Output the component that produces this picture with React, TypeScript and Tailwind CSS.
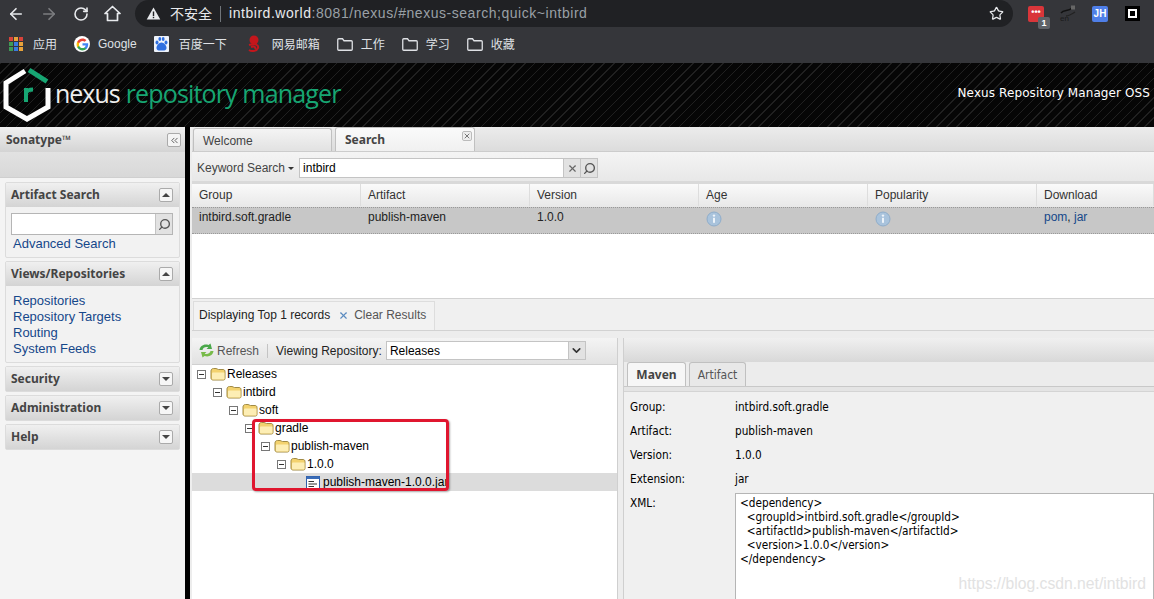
import { ArrowLeft, ArrowRight, RotateCw, Star, Search, ChevronsLeft, X, ChevronDown } from 'lucide-react';

const COLUMNS = ['Group', 'Artifact', 'Version', 'Age', 'Popularity', 'Download'];
const UI_FONT = "font-['Liberation_Sans',Arial,sans-serif]";
const BOLD_FONT = "font-['Noto_Sans',Verdana,sans-serif]";
const FORM_FONT = "font-['DejaVu_Sans_Condensed','DejaVu_Sans',sans-serif]";
const HEAD_BG = 'bg-gradient-to-b from-[#f0f0f0] to-[#d4d4d4]';

function Folder() {
  return (
    <svg width="16" height="14" viewBox="0 0 16 14" className="shrink-0">
      <path d="M1 4 C1 2.500 2 1.500 3.500 1.500 H6 C7 1.500 7.500 2.500 8.500 2.500 H13 C14.200 2.500 15 3.300 15 4.500 V11.500 C15 12.500 14.200 13 13.500 13 H3 C1.800 13 1 12 1 11 Z" fill="#f3d26e" stroke="#a08a45" />
      <path d="M2 6.500 C2 5.800 2.500 5.500 3 5.500 H14.500 V11.500 C14.500 12.200 14 12.500 13.500 12.500 H3 C2.500 12.500 2 12 2 11.500 Z" fill="#fdeeb4" />
    </svg>
  );
}

function Minus() {
  return (
    <span className="flex h-[9px] w-[9px] shrink-0 items-center justify-center border border-[#777] bg-white">
      <span className="h-px w-[5px] bg-[#333]" />
    </span>
  );
}

function TreeRow({ indent, label, selected }: { indent: string; label: string; selected?: boolean }) {
  return (
    <div className={`flex h-[18px] items-center text-[12px] text-black ${indent} ${selected ? 'bg-[#dcdcdc]' : ''}`}>
      {selected ? (
        <svg width="14" height="13" viewBox="0 0 14 13" className="mr-[3px] ml-[33px] shrink-0">
          <rect x="0.5" y="0.5" width="13" height="12" fill="#fff" stroke="#2f5ea8" />
          <rect x="0.5" y="0.5" width="13" height="2.5" fill="#3b6db8" />
          <path d="M2.5 5.5 H8 M2.5 8 H11 M2.5 10.5 H8" stroke="#333" />
        </svg>
      ) : (
        <>
          <Minus />
          <span className="ml-[4px] mr-[1px]"><Folder /></span>
        </>
      )}
      <span>{label}</span>
    </div>
  );
}

function Caret({ up }: { up?: boolean }) {
  return (
    <span className="flex h-[14px] w-[14px] items-center justify-center rounded-[2px] border border-[#aaa] bg-[#f6f6f6]">
      {up ? (
        <span className="h-0 w-0 border-x-[4px] border-b-[4px] border-x-transparent border-b-[#444]" />
      ) : (
        <span className="h-0 w-0 border-x-[4px] border-t-[4px] border-x-transparent border-t-[#444]" />
      )}
    </span>
  );
}

function Panel({ title, open, children }: { title: string; open?: boolean; children?: React.ReactNode }) {
  return (
    <div className="rounded-[2px] border border-[#dcdcdc] bg-[#f2f2f2]">
      <div className={`flex h-[24px] items-center justify-between pl-[5px] pr-[6px] ${HEAD_BG}`}>
        <span className={`${BOLD_FONT} text-[12px] font-bold text-[#444]`}>{title}</span>
        <Caret up={open} />
      </div>
      {children}
    </div>
  );
}

function NavLink({ children }: { children: React.ReactNode }) {
  return <div className="h-[16px] text-[13px] leading-[16px] text-[#15478a]">{children}</div>;
}

function FormRow({ label, value }: { label: string; value: string }) {
  return (
    <div className="flex h-[24px] items-center">
      <span className="w-[105px] text-black">{label}</span>
      <span className="text-black">{value}</span>
    </div>
  );
}

function InfoDot() {
  return (
    <svg width="16" height="16" viewBox="0 0 16 16" className="mt-[3px]">
      <circle cx="8" cy="8" r="7" fill="#a9c3dc" stroke="#8fadca" />
      <circle cx="8" cy="4.600" r="1.200" fill="#eef4fa" />
      <rect x="7" y="6.800" width="2" height="5" fill="#eef4fa" />
    </svg>
  );
}

function BrowserBars() {
  return (
    <>
      <div className="flex h-[27px] shrink-0 items-center bg-[#35363a] text-[#e8eaed]">
        <div className="flex w-[135px] shrink-0 items-center gap-[15px] pl-[7px]">
          <ArrowLeft size={18} strokeWidth={2.2} />
          <ArrowRight size={18} strokeWidth={2.2} className="text-[#7c7d80]" />
          <RotateCw size={16} strokeWidth={2.4} />
          <svg width="17" height="17" viewBox="0 0 17 17">
            <path d="M8.500 1.500 L16 8.500 H13.500 V15.500 H3.500 V8.500 H1 Z" fill="none" stroke="#e8eaed" strokeWidth="1.700" strokeLinejoin="round" />
          </svg>
        </div>
        <div className="flex h-[27px] w-[878px] shrink-0 items-center rounded-full bg-[#202124] pl-[11px] pr-[9px] text-[14px]">
          <svg width="15" height="13" viewBox="0 0 14 13" className="shrink-0">
            <path d="M7 0.5 L13.8 12.5 H0.2 Z" fill="#e8eaed" />
            <rect x="6.3" y="4.5" width="1.4" height="4.5" fill="#202124" />
            <rect x="6.3" y="9.8" width="1.4" height="1.4" fill="#202124" />
          </svg>
          <span className="ml-[9px] font-['Noto_Sans_CJK_SC',sans-serif]">不安全</span>
          <span className="mx-[8px] h-[16px] w-px bg-[#70757a]" />
          <span className={`${UI_FONT} tracking-[0.54px]`}>
            intbird.world<span className="text-[#9aa0a6]">:8081/nexus/#nexus-search;quick~intbird</span>
          </span>
          <Star size={15} strokeWidth={2} className="ml-auto" />
        </div>
        <div className="flex flex-1 items-center pl-[15px]">
          <div className="relative h-[16px] w-[16px] rounded-[2px] bg-[#d9363a] text-center text-[9px] font-bold leading-[12px] text-white">
            •••
            <span className="absolute left-[10px] top-[11px] h-[12px] w-[12px] rounded-[2px] bg-[#5f6368] text-[9px] leading-[12px]">1</span>
          </div>
          <span className="relative ml-[16px] h-[17px] w-[16px]">
            <svg width="16" height="17" viewBox="0 0 16 17">
              <path d="M1 8 C4 4 8 7 12 3" fill="none" stroke="#111" strokeWidth="1.500" />
              <path d="M6 11 C9 11 12 9 15 7" fill="none" stroke="#222" strokeWidth="1.300" />
              <rect x="11" y="0.5" width="4" height="4" fill="#666" />
            </svg>
            <span className="absolute bottom-[-1px] left-0 text-[8px] leading-[9px] text-[#1a1a1a]">en</span>
          </span>
          <span className="ml-[16px] h-[16px] w-[16px] rounded-[2px] bg-[#4f7fe8] text-center text-[10px] font-bold leading-[16px] text-white">JH</span>
          <span className="ml-[17px] flex h-[15px] w-[15px] items-center justify-center bg-black">
            <span className="h-[9px] w-[9px] border-2 border-white" />
          </span>
        </div>
      </div>
      <div className="flex h-[36px] shrink-0 items-center gap-[17px] bg-[#35363a] pb-[2px] pl-[9px] font-['Noto_Sans_CJK_SC',sans-serif] text-[12px] text-[#dfe1e5]">
        <span className="flex items-center gap-[10px]">
          <span className="grid h-[14px] w-[14px] grid-cols-3 gap-px">
            {['#d8433a', '#e8a33a', '#d8433a', '#3f9a55', '#3a7be0', '#e8a33a', '#3f9a55', '#3a7be0', '#e8a33a'].map((c, i) => (
              <span key={i} className="bg-current" style={{ color: c }} />
            ))}
          </span>
          应用
        </span>
        <span className="flex items-center gap-[8px]">
          <span className="flex h-[16px] w-[16px] items-center justify-center rounded-full bg-white">
            <svg width="13" height="13" viewBox="0 0 48 48">
              <path fill="#4285f4" d="M45 24c0-1.500-.1-3-.4-4.400H24v8.500h11.800c-.5 2.700-2 5-4.400 6.600v5.500h7.100C42.700 36 45 30.500 45 24z" />
              <path fill="#34a853" d="M24 46c5.900 0 10.900-2 14.500-5.300l-7.100-5.500c-2 1.300-4.500 2.100-7.400 2.100-5.700 0-10.500-3.800-12.200-9H4.500v5.700C8.100 41 15.500 46 24 46z" />
              <path fill="#fbbc05" d="M11.800 28.300c-.4-1.300-.7-2.800-.7-4.300s.3-3 .7-4.300V14H4.500C3 17 2.200 20.400 2.200 24s.8 7 2.300 10z" />
              <path fill="#ea4335" d="M24 10.700c3.200 0 6.100 1.100 8.400 3.300l6.300-6.300C34.900 4.200 29.900 2 24 2 15.500 2 8.100 7 4.500 14l7.300 5.700c1.700-5.200 6.500-9 12.200-9z" />
            </svg>
          </span>
          <span className={UI_FONT}>Google</span>
        </span>
        <span className="flex items-center gap-[10px]">
          <svg width="15" height="16" viewBox="0 0 15 16">
            <rect width="15" height="16" rx="1" fill="#eef3fb" />
            <ellipse cx="3" cy="6.500" rx="1.500" ry="2" fill="#2f6fe0" />
            <ellipse cx="5.800" cy="3" rx="1.400" ry="2" fill="#2f6fe0" />
            <ellipse cx="9.200" cy="3" rx="1.400" ry="2" fill="#2f6fe0" />
            <ellipse cx="12" cy="6.500" rx="1.500" ry="2" fill="#2f6fe0" />
            <path d="M7.500 6.500 C10 6.500 13 10 12.500 12.500 C12 15 9 14.500 7.500 14.500 C6 14.500 3 15 2.500 12.500 C2 10 5 6.500 7.500 6.500 Z" fill="#2f6fe0" />
          </svg>
          百度一下
        </span>
        <span className="ml-[3px] flex items-center gap-[11px]">
          <svg width="14" height="18" viewBox="0 0 14 18">
            <circle cx="7" cy="5" r="4.500" fill="#c4161c" />
            <path d="M2 10 C8 8 12 10 11 13 C10 16 5 17 2 15 M4 12 C7 11 9 12 8 14" fill="none" stroke="#c4161c" strokeWidth="2" />
          </svg>
          网易邮箱
        </span>
        {['工作', '学习', '收藏'].map((name) => (
          <span key={name} className="flex items-center gap-[8px]">
            <svg width="16" height="13" viewBox="0 0 16 13">
              <path d="M0.750 1.750 C0.750 1.200 1.200 0.750 1.750 0.750 H5.500 L7 2.750 H14.250 C14.800 2.750 15.250 3.200 15.250 3.750 V11.250 C15.250 11.800 14.800 12.250 14.250 12.250 H1.750 C1.200 12.250 0.750 11.800 0.750 11.250 Z" fill="none" stroke="#dfe1e5" strokeWidth="1.300" />
            </svg>
            {name}
          </span>
        ))}
      </div>
    </>
  );
}

function NexusHeader() {
  return (
    <div className="flex h-[64px] shrink-0 items-center justify-between bg-[repeating-linear-gradient(135deg,#202020_0px,#202020_1px,#060606_1px,#060606_7px)] pr-[4px]">
      <div className="flex items-center">
        <svg width="52" height="60" viewBox="0 0 52 60">
          <path d="M25 6 L6 18 V42 L27 54 L48 42 V23" fill="none" stroke="#fff" strokeWidth="5" />
          <path d="M29 5 L47 16.500" fill="none" stroke="#17a673" strokeWidth="5" />
          <path d="M26 37 V23 M26 28 C27 25 30 24.500 33 24.500" fill="none" stroke="#17a673" strokeWidth="4" />
        </svg>
        <span className="ml-[3px] mb-[2px] font-['Open_Sans',sans-serif] text-[25px] tracking-[-1px] text-[#eeeeee]">nexus</span>
        <span className="ml-[6px] mb-[2px] font-['Open_Sans',sans-serif] text-[25px] tracking-[-0.85px] text-[#17a673]">repository manager</span>
      </div>
      <span className="mb-[4px] font-['DejaVu_Sans',Verdana,sans-serif] text-[12px] tracking-[0.1px] text-white">Nexus Repository Manager OSS</span>
    </div>
  );
}

function Sidebar() {
  return (
    <div className="w-[185px] shrink-0 bg-[#f4f4f4]">
      <div className={`flex h-[25px] items-center justify-between pl-[6px] pr-[4px] pt-[1px] ${HEAD_BG}`}>
        <span className={`${BOLD_FONT} text-[12px] font-bold text-[#444]`}>Sonatype™</span>
        <span className="flex h-[14px] w-[14px] items-center justify-center rounded-[2px] border border-[#aaa] bg-[#f4f4f4]">
          <ChevronsLeft size={11} className="text-[#555]" />
        </span>
      </div>
      <div className="h-[26px] border-b border-[#cfcfcf] bg-gradient-to-b from-[#e2e2e2] to-[#d8d8d8]" />
      <div className="flex flex-col gap-[3px] px-[5px] pt-[4px]">
        <Panel title="Artifact Search" open>
          <div className="px-[5px] pb-[5px] pt-[6px]">
            <div className="flex h-[22px] w-[162px] border border-[#b5b5b5] bg-white">
              <span className="ml-auto flex w-[17px] items-center justify-center border-l border-[#c4c4c4] bg-[#e2e2e2]">
                <Search size={13} strokeWidth={2.5} className="-scale-x-100 text-[#555]" />
              </span>
            </div>
            <div className="mt-[1px] pl-[2px]">
              <NavLink>Advanced Search</NavLink>
            </div>
          </div>
        </Panel>
        <Panel title="Views/Repositories" open>
          <div className="pb-[5px] pl-[7px] pt-[7px]">
            <NavLink>Repositories</NavLink>
            <NavLink>Repository Targets</NavLink>
            <NavLink>Routing</NavLink>
            <NavLink>System Feeds</NavLink>
          </div>
        </Panel>
        <Panel title="Security" />
        <Panel title="Administration" />
        <Panel title="Help" />
      </div>
    </div>
  );
}

function SearchPanel() {
  return (
    <>
      <div className="flex h-[25px] shrink-0 items-end gap-[3px] border-b border-[#cccccc] bg-gradient-to-b from-[#ececec] to-[#dcdcdc] pl-[1px]">
        <div className="flex h-[23px] w-[139px] items-center rounded-t-[3px] border border-b-0 border-[#c0c0c0] bg-gradient-to-b from-[#f4f4f4] to-[#e2e2e2] pl-[9px] pt-[1px] text-[#444]">Welcome</div>
        <div className="relative flex h-[24px] w-[140px] items-center rounded-t-[3px] border border-b-0 border-[#c0c0c0] bg-gradient-to-b from-[#fafafa] to-[#f0f0f0] pl-[9px] pt-[1px] font-bold text-[#444]">
          <span className={`${BOLD_FONT} text-[12px]`}>Search</span>
          <span className="absolute right-[2px] top-[3px] flex h-[10px] w-[10px] items-center justify-center rounded-[2px] border border-[#bbb] bg-[#eee]">
            <X size={8} strokeWidth={3} className="text-[#777]" />
          </span>
        </div>
      </div>
      <div className="flex h-[32px] shrink-0 items-center border-b-[3px] border-[#d9d9d9] bg-gradient-to-b from-[#f4f4f4] to-[#e8e8e8] pl-[5px] pt-[3px]">
        <span className="text-[#444]">Keyword Search</span>
        <span className="ml-[3px] h-0 w-0 border-x-[3px] border-t-[3px] border-x-transparent border-t-[#333]" />
        <div className="ml-[5px] flex h-[20px] w-[299px] items-center border border-[#c4c4c4] bg-white pl-[3px] text-[12px] text-black">
          intbird
          <span className="ml-auto flex h-full w-[17px] items-center justify-center border-l border-[#c4c4c4] bg-[#e2e2e2]">
            <X size={11} strokeWidth={2.5} className="text-[#666]" />
          </span>
          <span className="flex h-full w-[17px] items-center justify-center border-l border-[#c4c4c4] bg-[#e2e2e2]">
            <Search size={13} strokeWidth={2.5} className="-scale-x-100 text-[#555]" />
          </span>
        </div>
      </div>
      <div className="grid h-[23px] shrink-0 grid-cols-[169px_169px_169px_169px_169px_1fr] bg-gradient-to-b from-[#fafafa] to-[#e8e8e8] pb-[1px]">
        {COLUMNS.map((col) => (
          <div key={col} className="flex items-center border-r border-[#dddddd] pl-[7px] text-[#333]">{col}</div>
        ))}
      </div>
      <div className="grid h-[27px] shrink-0 grid-cols-[169px_169px_169px_169px_169px_1fr] border-y border-dotted border-[#999] bg-[#c7c7c7] text-[#222]">
        <div className="pl-[7px]">intbird.soft.gradle</div>
        <div className="pl-[7px]">publish-maven</div>
        <div className="pl-[7px]">1.0.0</div>
        <div className="pl-[7px]"><InfoDot /></div>
        <div className="pl-[7px]"><InfoDot /></div>
        <div className="pl-[7px] text-[#15478a]">pom<span className="text-[#222]">, </span>jar</div>
      </div>
      <div className="h-[64px] shrink-0 bg-white" />
      <div className="flex h-[33px] shrink-0 items-end border-y border-[#d2d2d2] bg-[#f0f0f0] pl-[1px]">
        <div className="flex h-[29px] w-[242px] items-center border border-b-0 border-[#dddddd] bg-[#f2f2f2] pb-[2px] pl-[5px]">
          <span className="text-[#222]">Displaying Top 1 records</span>
          <X size={11} strokeWidth={2.5} className="ml-[8px] text-[#5b8bc0]" />
          <span className="ml-[5px] text-[#555]">Clear Results</span>
        </div>
      </div>
    </>
  );
}

function TreePane() {
  return (
    <div className="w-[426px] shrink-0 border-r border-[#cfcfcf] bg-white">
      <div className="flex h-[27px] items-center border-b border-[#d0d0d0] bg-gradient-to-b from-[#f4f4f4] to-[#e2e2e2] pb-[1px] pl-[6px]">
        <svg width="17" height="15" viewBox="0 0 17 15">
          <path d="M1.500 7 C2 3 6 0.500 10.500 2 L12.500 0.500 L14 6 H8.500 L10.300 4.300 C7 3.500 5 5 4.500 7 Z" fill="#4aa84a" />
          <path d="M15.500 8 C15 12 11 14.500 6.500 13 L4.500 14.500 L3 9 H8.500 L6.700 10.700 C10 11.500 12 10 12.500 8 Z" fill="#78bb4a" />
        </svg>
        <span className="ml-[2px] text-[#555]">Refresh</span>
        <span className="mx-[8px] h-[14px] w-px bg-[#c4c4c4]" />
        <span className="text-[#222]">Viewing Repository:</span>
        <div className="ml-[4px] flex h-[19px] w-[200px] items-center border border-[#c4c4c4] bg-white pl-[3px] text-black">
          Releases
          <span className="ml-auto flex h-full w-[17px] items-center justify-center border-l border-[#c4c4c4] bg-[#e2e2e2]">
            <ChevronDown size={13} strokeWidth={3} className="text-[#333]" />
          </span>
        </div>
      </div>
      <div className="relative">
        <TreeRow indent="pl-[5px]" label="Releases" />
        <TreeRow indent="pl-[21px]" label="intbird" />
        <TreeRow indent="pl-[37px]" label="soft" />
        <TreeRow indent="pl-[53px]" label="gradle" />
        <TreeRow indent="pl-[69px]" label="publish-maven" />
        <TreeRow indent="pl-[85px]" label="1.0.0" />
        <TreeRow indent="pl-[81px]" label="publish-maven-1.0.0.jar" selected />
        <div className="absolute left-[60px] top-[54px] h-[72px] w-[197px] rounded-[4px] border-[3px] border-[#e0162f] shadow-[1px_1px_2px_rgba(0,0,0,0.35)]" />
      </div>
    </div>
  );
}

function DetailPane() {
  return (
    <div className="ml-[5px] flex min-h-0 flex-1 flex-col overflow-hidden border-l border-[#cfcfcf] bg-[#f0f0f0]">
      <div className="h-[24px] shrink-0 bg-gradient-to-b from-[#f0f0f0] to-[#d8d8d8]" />
      <div className="flex h-[25px] shrink-0 items-end gap-[3px] border-b border-[#c8c8c8] bg-[#ececec] pl-[3px] text-[12px]">
        <div className={`${BOLD_FONT} flex h-[24px] w-[59px] items-center justify-center rounded-t-[3px] border border-b-0 border-[#c0c0c0] bg-[#f6f6f6] font-bold text-[#444]`}>Maven</div>
        <div className={`${FORM_FONT} flex h-[24px] w-[57px] items-center justify-center rounded-t-[3px] border border-b-0 border-[#c0c0c0] bg-[#e8e8e8] text-[12px] text-[#555]`}>Artifact</div>
      </div>
      <div className="h-[5px] shrink-0 border-b border-[#d4d4d4] bg-[#e4e4e4]" />
      <div className={`${FORM_FONT} min-h-0 flex-1 pl-[6px] pt-[4px] text-[11.7px]`}>
        <FormRow label="Group:" value="intbird.soft.gradle" />
        <FormRow label="Artifact:" value="publish-maven" />
        <FormRow label="Version:" value="1.0.0" />
        <FormRow label="Extension:" value="jar" />
        <div className="flex pt-[1px]">
          <span className="w-[105px] pt-[2px] text-black">XML:</span>
          <pre className={`${FORM_FONT} h-[120px] flex-1 border border-[#b5b5b5] bg-white pl-[4px] pt-[2px] text-[11.7px] leading-[14px] text-black`}>
            {'<dependency>\n  <groupId>intbird.soft.gradle</groupId>\n  <artifactId>publish-maven</artifactId>\n  <version>1.0.0</version>\n</dependency>'}
          </pre>
        </div>
      </div>
    </div>
  );
}

export default function App() {
  return (
    <div className={`${UI_FONT} relative flex h-[599px] w-[1154px] flex-col overflow-hidden bg-black text-[12px]`}>
      <BrowserBars />
      <NexusHeader />
      <div className="flex min-h-0 flex-1 gap-[5px]">
        <Sidebar />
        <div className="flex min-h-0 min-w-0 flex-1 flex-col bg-[#ededed] pl-[2px]">
          <SearchPanel />
          <div className="flex min-h-0 flex-1 pt-[7px]">
            <TreePane />
            <DetailPane />
          </div>
        </div>
      </div>
      <span className="absolute right-[8px] top-[572px] text-[15.7px] text-[#e2e2e2]">https://blog.csdn.net/intbird</span>
    </div>
  );
}
